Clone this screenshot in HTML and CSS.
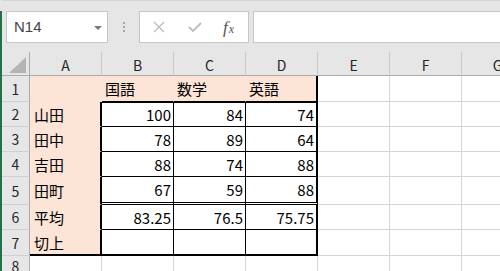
FILE: index.html
```html
<!DOCTYPE html>
<html lang="ja">
<head>
    <meta charset="UTF-8">
    <title>Book1 - Excel</title>
    <link rel="stylesheet" href="styles.css">
</head>
<body>
    <div class="edge"></div>
    <div class="main">
        <div class="formula-bar">
            <div class="name-box">
                <span>N14</span>
                <svg class="caret" width="8" height="4" viewBox="0 0 8 4"><path d="M0 0H8L4 4Z" fill="#7a7a7a"/></svg>
            </div>
            <div class="grip">
                <svg width="2" height="10" viewBox="0 0 2 10"><rect y="0" width="2" height="2" fill="#a6a6a6"/><rect y="4" width="2" height="2" fill="#a6a6a6"/><rect y="8" width="2" height="2" fill="#a6a6a6"/></svg>
            </div>
            <div class="fn-box">
                <svg width="12" height="12" viewBox="0 0 12 12"><path d="M1 1L11 11M11 1L1 11" stroke="#bdbdbd" stroke-width="1.4" fill="none"/></svg>
                <svg width="14" height="10" viewBox="0 0 14 10"><path d="M1 5L5 9L13 1" stroke="#bdbdbd" stroke-width="1.8" fill="none"/></svg>
                <span class="fx">f<span class="fx-x">x</span></span>
            </div>
            <div class="formula-input"></div>
        </div>

        <div class="sheet">
            <!-- header row -->
            <div class="corner"><svg width="17" height="16" viewBox="0 0 17 16"><path d="M17 0V16H0Z" fill="#b4b4b4"/></svg></div>
            <div class="ch">A</div>
            <div class="ch">B</div>
            <div class="ch">C</div>
            <div class="ch">D</div>
            <div class="ch">E</div>
            <div class="ch">F</div>
            <div class="ch">G</div>

            <!-- row 1 -->
            <div class="rh">1</div>
            <div class="c label top"></div>
            <div class="c label head">国語</div>
            <div class="c label head">数学</div>
            <div class="c label head last">英語</div>
            <div class="c"></div>
            <div class="c"></div>
            <div class="c"></div>

            <!-- row 2 -->
            <div class="rh">2</div>
            <div class="c label side">山田</div>
            <div class="c num first">100</div>
            <div class="c num first">84</div>
            <div class="c num first last">74</div>
            <div class="c"></div>
            <div class="c"></div>
            <div class="c"></div>

            <!-- row 3 -->
            <div class="rh">3</div>
            <div class="c label side">田中</div>
            <div class="c num">78</div>
            <div class="c num">89</div>
            <div class="c num last">64</div>
            <div class="c"></div>
            <div class="c"></div>
            <div class="c"></div>

            <!-- row 4 -->
            <div class="rh">4</div>
            <div class="c label side">吉田</div>
            <div class="c num">88</div>
            <div class="c num">74</div>
            <div class="c num last">88</div>
            <div class="c"></div>
            <div class="c"></div>
            <div class="c"></div>

            <!-- row 5 -->
            <div class="rh">5</div>
            <div class="c label side">田町</div>
            <div class="c num double">67</div>
            <div class="c num double">59</div>
            <div class="c num double last">88</div>
            <div class="c"></div>
            <div class="c"></div>
            <div class="c"></div>

            <!-- row 6 -->
            <div class="rh">6</div>
            <div class="c label side">平均</div>
            <div class="c num">83.25</div>
            <div class="c num">76.5</div>
            <div class="c num last">75.75</div>
            <div class="c"></div>
            <div class="c"></div>
            <div class="c"></div>

            <!-- row 7 -->
            <div class="rh">7</div>
            <div class="c label side bottom">切上</div>
            <div class="c num bottom"></div>
            <div class="c num bottom"></div>
            <div class="c num bottom last"></div>
            <div class="c"></div>
            <div class="c"></div>
            <div class="c"></div>

            <!-- row 8 -->
            <div class="rh">8</div>
            <div class="c"></div>
            <div class="c"></div>
            <div class="c"></div>
            <div class="c"></div>
            <div class="c"></div>
            <div class="c"></div>
            <div class="c"></div>
        </div>
    </div>
</body>
</html>
```

FILE: styles.css
```css
body {
    margin: 0;
    height: 271px;
    overflow: hidden;
    display: flex;
    background: #e6e6e6;
    font-family: "Noto Sans CJK JP", "Noto Sans", sans-serif;
}
.edge {
    width: 2px;
    margin-top: 11px;
    background: #217346;
    flex: none;
}
.main {
    flex: 1;
    min-width: 0;
    overflow: hidden;
}

/* formula bar */
.formula-bar {
    height: 52px;
    box-sizing: border-box;
    padding: 10px 0 0 4px;
    display: flex;
    align-items: flex-start;
    border-top: 1px solid #d6d6d6;
}
.name-box,
.fn-box,
.formula-input {
    height: 32px;
    box-sizing: border-box;
    background: #fff;
    border: 1px solid #c6c6c6;
}
.name-box {
    width: 102px;
    display: flex;
    align-items: center;
    justify-content: space-between;
    padding: 0 5px 1px 7px;
    font-family: "Liberation Sans", sans-serif;
    font-size: 15px;
    color: #444;
}
.caret {
    margin-top: 2px;
}
.grip {
    width: 31px;
    height: 32px;
    display: flex;
    align-items: center;
    justify-content: center;
}
.fn-box {
    width: 110px;
    display: flex;
    align-items: center;
    padding: 0 0 0 13px;
}
.fn-box svg:nth-child(2) {
    margin-left: 23px;
}
.fx {
    margin-left: 21px;
    font-family: "Liberation Serif", serif;
    font-style: italic;
    font-size: 17px;
    color: #555;
    line-height: 1;
}
.fx-x {
    font-size: 12px;
    margin-left: 1px;
}
.formula-input {
    flex: 1;
    margin-left: 4px;
    margin-right: -2px;
}

/* sheet grid */
.sheet {
    display: grid;
    grid-template-columns: 28px repeat(7, 72px);
    grid-template-rows: 24px 26px 25px 25px 25px 28px 25px 26px 1fr;
    height: 219px;
    font-size: 15px;
}
.corner,
.ch,
.rh {
    background: #e6e6e6;
    box-sizing: border-box;
    display: flex;
    align-items: center;
    justify-content: center;
    color: #262626;
    font-size: 14px;
}
.corner {
    border-right: 1px solid #ababab;
    border-bottom: 1px solid #ababab;
    align-items: flex-end;
    justify-content: flex-end;
    padding: 0 3px 2px 0;
}
.ch {
    border-right: 1px solid #c8c8c8;
    border-bottom: 1px solid #ababab;
    padding-top: 2px;
}
.rh {
    border-right: 1px solid #ababab;
    border-bottom: 1px solid #d0d0d0;
}
.c {
    background: #fff;
    box-sizing: border-box;
    border-right: 1px solid #d4d4d4;
    border-bottom: 1px solid #d4d4d4;
    display: flex;
    align-items: center;
    padding: 0 3px 0 4px;
    white-space: nowrap;
    overflow: hidden;
    color: #000;
}
.num {
    justify-content: flex-end;
    padding-right: 2px;
    border-right-color: #000;
    border-bottom-color: #000;
}
.label {
    background: #fce4d6;
    border-bottom-color: #fce4d6;
    border-right-color: #f3e9e2;
}
.head {
    padding-left: 3px;
    border-bottom-color: #000;
}
.side {
    border-right: 2px solid #000;
}
.first {
    border-top: 1px solid #000;
}
.double {
    border-bottom: 3px double #000;
}
.bottom {
    border-bottom: 2px solid #000;
}
.last {
    border-right: 2px solid #000;
}
```
